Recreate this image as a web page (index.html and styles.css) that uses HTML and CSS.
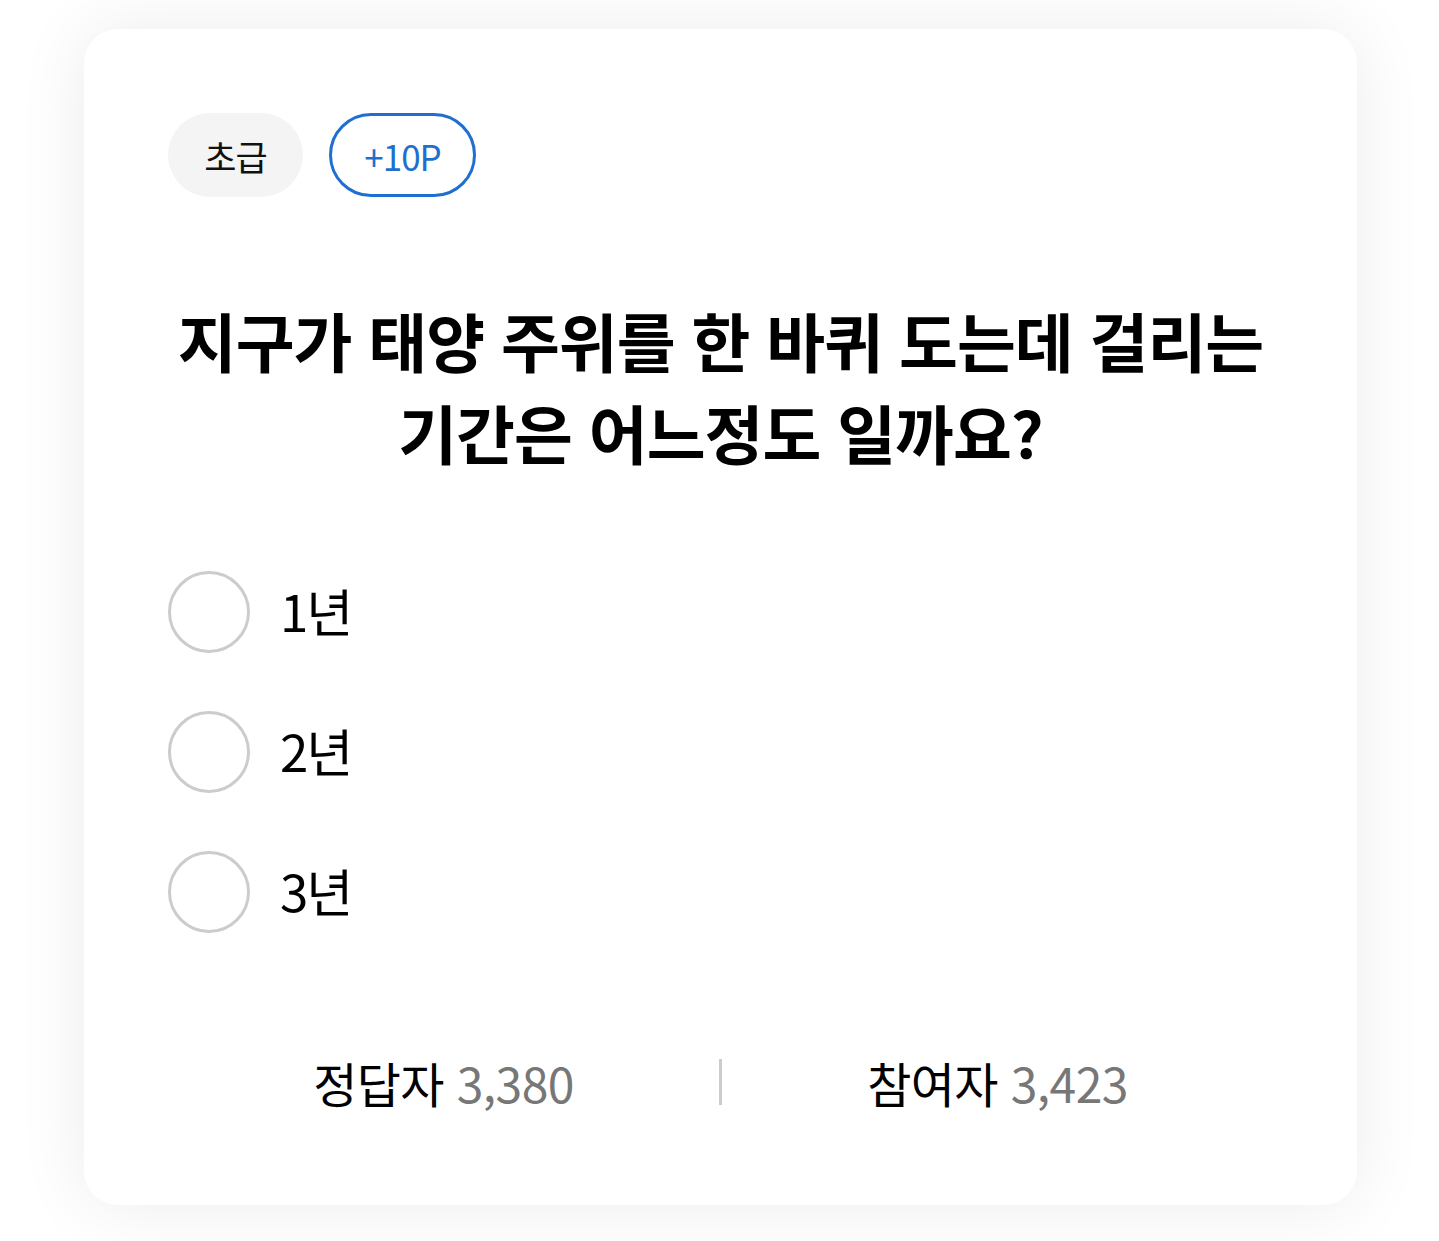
FILE: index.html
```html
<!DOCTYPE html>
<html lang="ko">
<head>
<meta charset="utf-8">
<link rel="stylesheet" href="styles.css">
</head>
<body>
<div class="page">
  <div class="card">
    <div class="badges">
      <span class="badge level">초급</span>
      <span class="badge point">+10P</span>
    </div>
    <h1 class="question">지구가 태양 주위를 한 바퀴 도는데 걸리는<br>기간은 어느정도 일까요?</h1>
    <ul class="options">
      <li class="option"><span class="radio"></span><span class="label">1년</span></li>
      <li class="option"><span class="radio"></span><span class="label">2년</span></li>
      <li class="option"><span class="radio"></span><span class="label">3년</span></li>
    </ul>
    <div class="stats">
      <div class="stat"><span class="stat-name">정답자</span> <span class="stat-num">3,380</span></div>
      <div class="divider"></div>
      <div class="stat"><span class="stat-name">참여자</span> <span class="stat-num">3,423</span></div>
    </div>
  </div>
</div>
</body>
</html>
```
FILE: styles.css
```css
html, body {
  margin: 0;
  padding: 0;
  background: #ffffff;
}
body {
  font-family: "Noto Sans CJK KR", "Noto Sans", sans-serif;
  color: #000;
}
.page {
  padding: 29px 82px 36px 84px;
}
.card {
  width: 1273px;
  height: 1176px;
  box-sizing: border-box;
  background: #fff;
  border-radius: 34px;
  box-shadow: 0 0 70px rgba(0, 0, 0, 0.08);
  padding: 84px 84px 0 84px;
  display: flex;
  flex-direction: column;
}
.badges {
  display: flex;
  gap: 26px;
}
.badge {
  height: 84px;
  box-sizing: border-box;
  border-radius: 42px;
  display: flex;
  align-items: center;
  justify-content: center;
  font-size: 35px;
  letter-spacing: -1px;
}
.level {
  width: 135px;
  background: #f4f4f4;
  color: #111;
}
.point {
  width: 147px;
  border: 3px solid #1f6fd0;
  color: #1f6fd0;
}
.question {
  margin: 96px 0 0 0;
  text-align: center;
  font-size: 64px;
  line-height: 92px;
  font-weight: 700;
  letter-spacing: -1px;
}
.options {
  list-style: none;
  margin: 94px 0 0 0;
  padding: 0;
  display: flex;
  flex-direction: column;
  gap: 58px;
}
.option {
  display: flex;
  align-items: center;
  gap: 30px;
  height: 82px;
}
.radio {
  width: 82px;
  height: 82px;
  box-sizing: border-box;
  border: 3px solid #cccccc;
  border-radius: 50%;
}
.label {
  font-size: 51px;
  letter-spacing: -2px;
  position: relative;
  top: -2px;
}
.stats {
  margin-top: 114px;
  display: flex;
  align-items: center;
}
.stat {
  flex: 1;
  text-align: center;
  font-size: 48px;
  letter-spacing: -0.6px;
  white-space: nowrap;
}
.stat-num {
  color: #777;
}
.divider {
  width: 3px;
  height: 46px;
  background: #cccccc;
}
```
